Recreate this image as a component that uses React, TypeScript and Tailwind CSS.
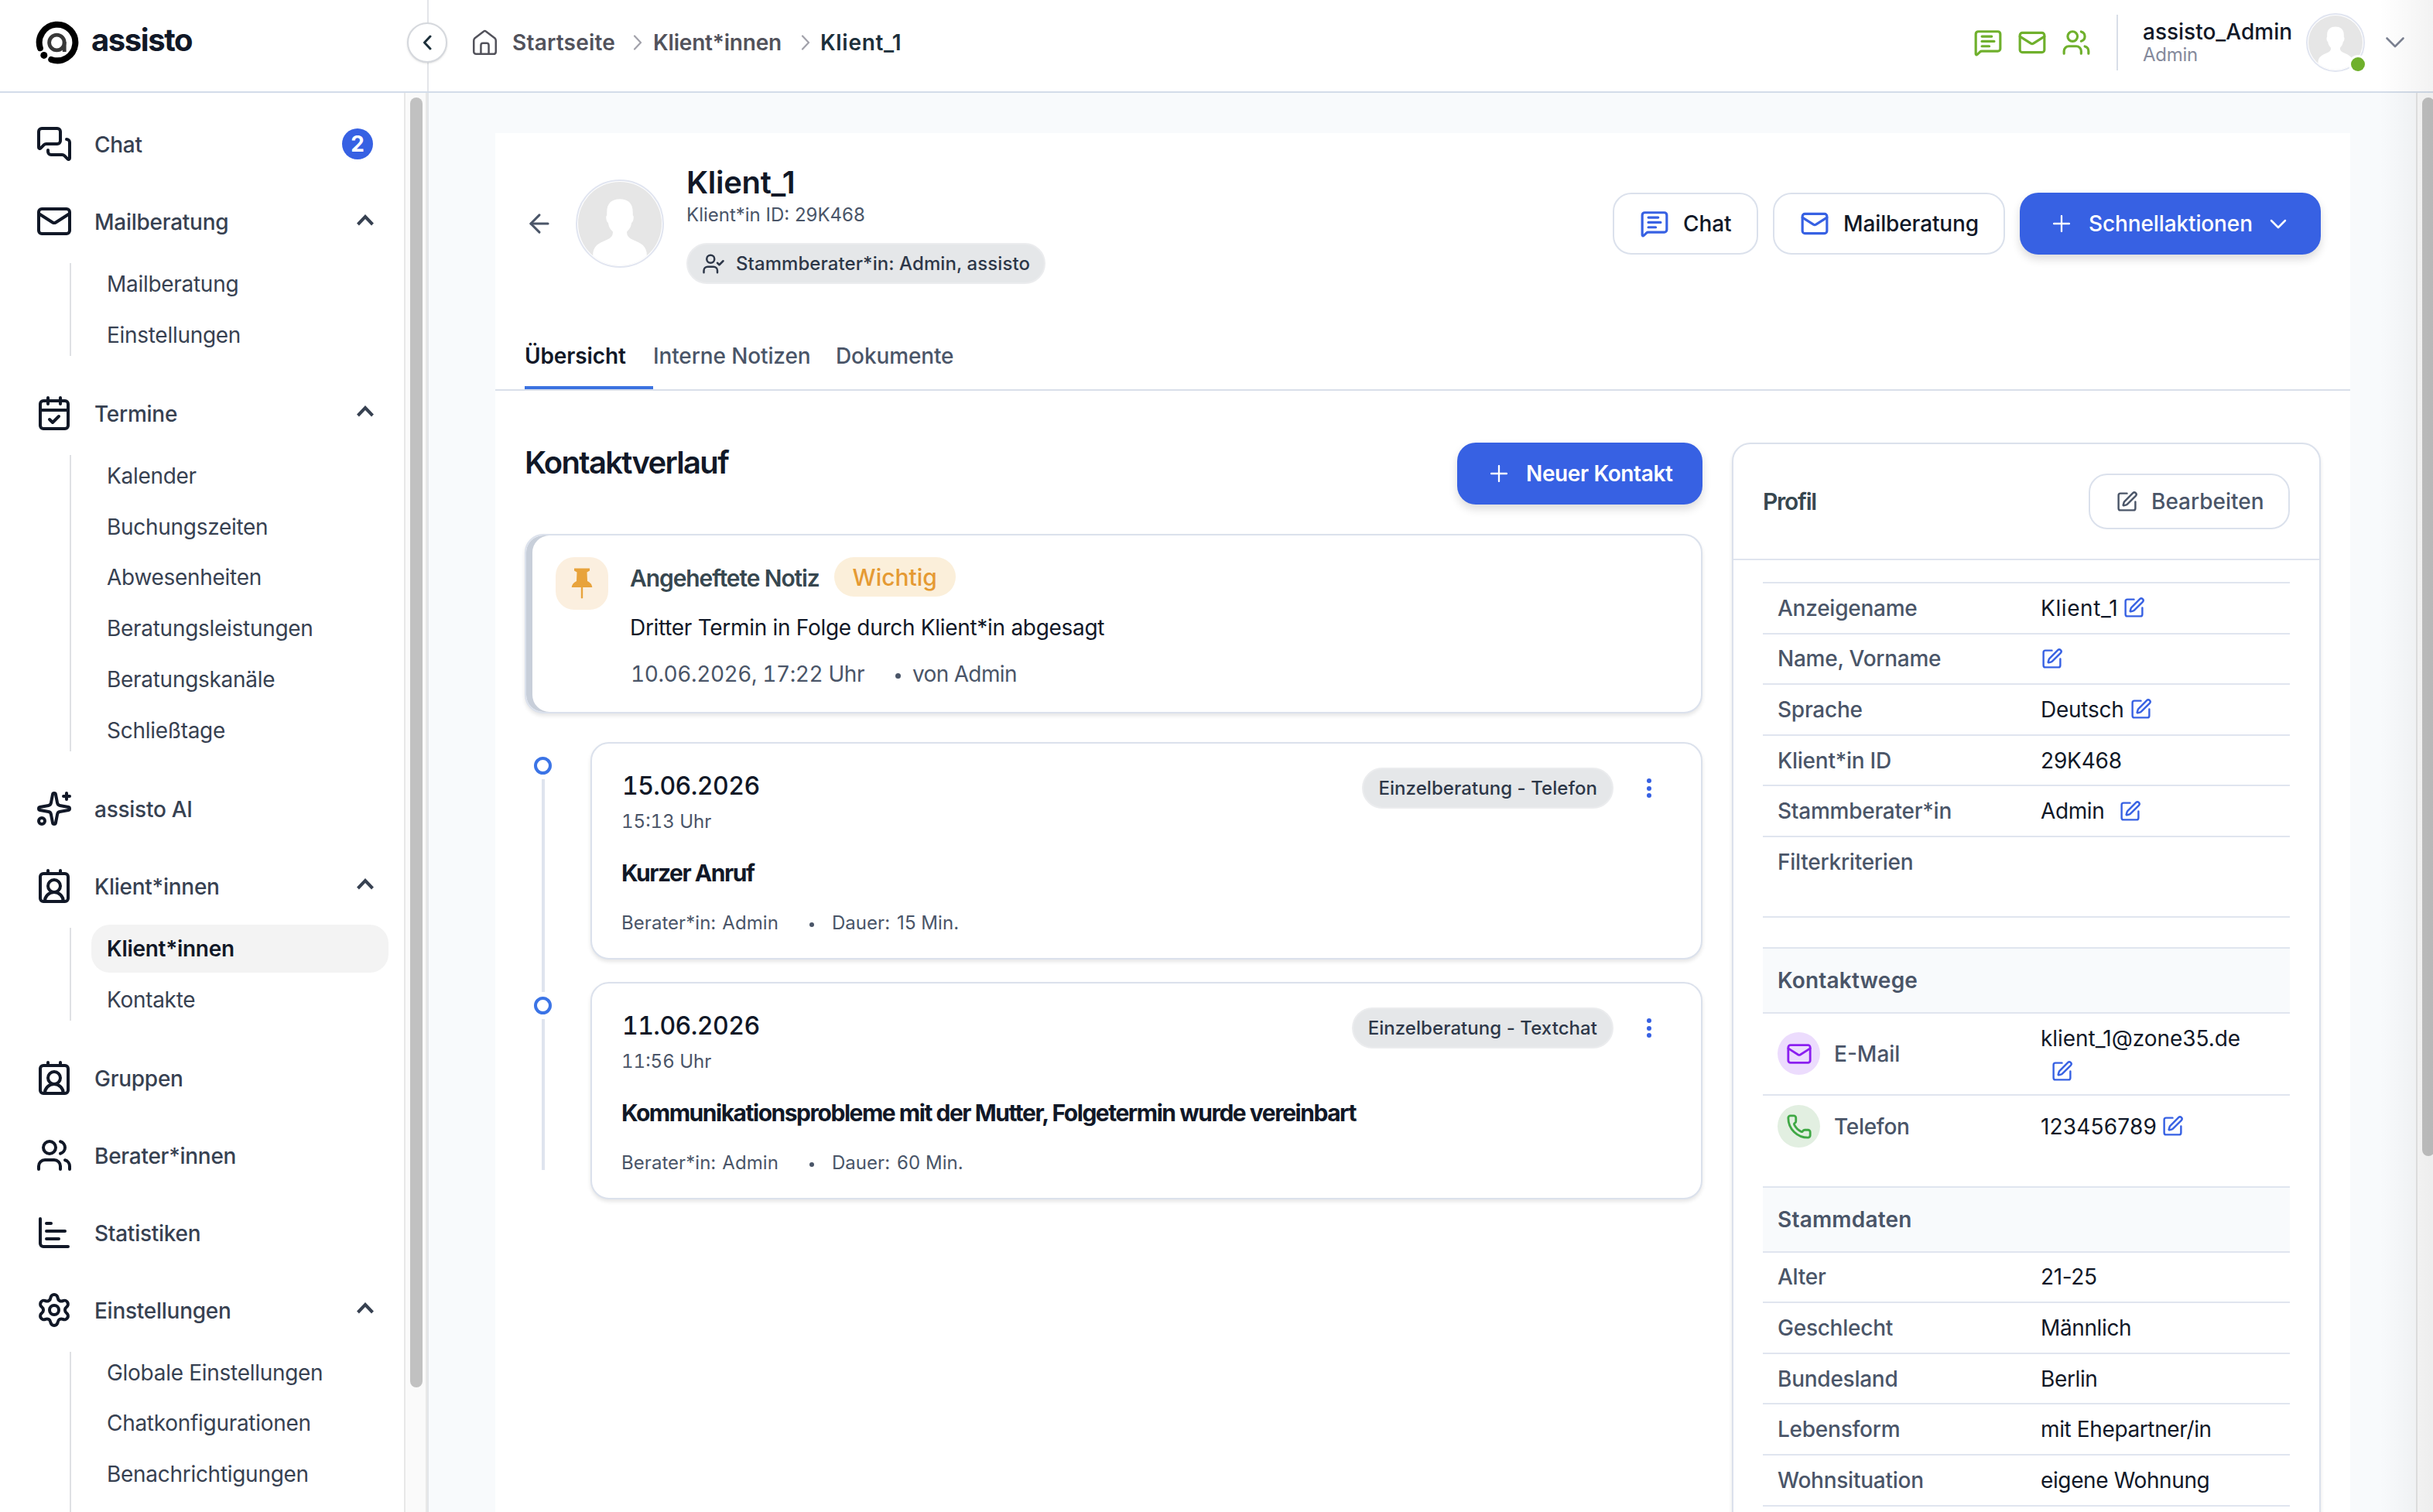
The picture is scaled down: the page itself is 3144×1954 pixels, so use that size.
import type { ReactNode } from 'react';
import {
  ArrowLeft,
  CalendarCheck,
  ChartBar,
  ContactRound,
  Mail,
  MessageSquareText,
  MessagesSquare,
  Phone,
  Settings,
  Sparkles,
  SquarePen,
  UserCheck,
  Users,
} from 'lucide-react';
import type { LucideIcon } from 'lucide-react';

type NavEntry = {
  label: string;
  icon: LucideIcon;
  badge?: number;
  active?: string;
  children?: string[];
};

const navEntries: NavEntry[] = [
  { label: 'Chat', icon: MessagesSquare, badge: 2 },
  { label: 'Mailberatung', icon: Mail, children: ['Mailberatung', 'Einstellungen'] },
  {
    label: 'Termine',
    icon: CalendarCheck,
    children: [
      'Kalender',
      'Buchungszeiten',
      'Abwesenheiten',
      'Beratungsleistungen',
      'Beratungskanäle',
      'Schließtage',
    ],
  },
  { label: 'assisto AI', icon: Sparkles },
  { label: 'Klient*innen', icon: ContactRound, active: 'Klient*innen', children: ['Klient*innen', 'Kontakte'] },
  { label: 'Gruppen', icon: ContactRound },
  { label: 'Berater*innen', icon: Users },
  { label: 'Statistiken', icon: ChartBar },
  {
    label: 'Einstellungen',
    icon: Settings,
    children: ['Globale Einstellungen', 'Chatkonfigurationen', 'Benachrichtigungen'],
  },
];

const contacts = [
  {
    date: '15.06.2026',
    time: '15:13 Uhr',
    title: 'Kurzer Anruf',
    type: 'Einzelberatung - Telefon',
    duration: '15 Min.',
  },
  {
    date: '11.06.2026',
    time: '11:56 Uhr',
    title: 'Kommunikationsprobleme mit der Mutter, Folgetermin wurde vereinbart',
    type: 'Einzelberatung - Textchat',
    duration: '60 Min.',
  },
];

const masterData = [
  { label: 'Alter', value: '21-25' },
  { label: 'Geschlecht', value: 'Männlich' },
  { label: 'Bundesland', value: 'Berlin' },
  { label: 'Lebensform', value: 'mit Ehepartner/in' },
  { label: 'Wohnsituation', value: 'eigene Wohnung' },
];

function Logo() {
  return (
    <svg width="60" height="60" viewBox="0 0 60 60" fill="none">
      <path d="M7.9 37.2A23.3 23.3 0 1 1 22.2 51.9" stroke="#000" strokeWidth="8" strokeLinecap="round" />
      <circle cx="12.8" cy="46.4" r="4.5" fill="#000" />
      <circle cx="29.4" cy="30" r="9.8" stroke="#383838" strokeWidth="4.8" />
      <path d="M39.2 29v13" stroke="#383838" strokeWidth="4.8" />
    </svg>
  );
}

function Avatar({ className }: { className: string }) {
  return (
    <div className={`${className} shrink-0 overflow-hidden rounded-full border-2 border-[#e1e5f0] bg-white p-px`}>
      <svg className="h-full w-full rounded-full" viewBox="0 0 100 100">
        <rect width="100" height="100" fill="#e6e6e6" />
        <path
          fill="#fff"
          d="M50 20.6C41 20.6 34.5 25 34.5 36V40C32.5 41 34 48 36 49C37 55 39 57 41.5 59.5C42 64 40 66 37 68C28 72.5 20 74 18 84L17 101H83L82 84C80 74 72 72.5 63 68C60 66 58 64 58.5 59.5C61 57 63 55 64 49C66 48 67.5 41 65.5 40V36C65.5 25 59 20.6 50 20.6Z"
        />
      </svg>
    </div>
  );
}

function ChevronUp() {
  return (
    <svg width="22" height="15" viewBox="0 0 22 15" fill="none">
      <path d="M1.5 13L11 3L20.5 13" stroke="#374151" strokeWidth="4" />
    </svg>
  );
}

function BreadcrumbChevron() {
  return (
    <svg width="12" height="20" viewBox="0 0 12 20" fill="none">
      <path d="M2 1.5L10 10L2 18.5" stroke="#a1a1aa" strokeWidth="2.2" strokeLinecap="round" strokeLinejoin="round" />
    </svg>
  );
}

function PlusSign() {
  return (
    <svg width="22" height="22" viewBox="0 0 22 22" fill="none">
      <path d="M11 1v20M1 11h20" stroke="#fff" strokeWidth="2.3" strokeLinecap="round" />
    </svg>
  );
}

function EditIcon() {
  return <SquarePen size={29} strokeWidth={2} className="shrink-0 text-[#3761e3]" />;
}

function Sidebar() {
  return (
    <aside className="flex w-[554px] shrink-0 overflow-hidden border-r-2 border-[#e3e5e9] bg-white">
      <nav className="w-[522px] pt-4">
        {navEntries.map((entry) => (
          <div key={entry.label}>
            <div className="flex h-[100px] items-center pr-[39px] pl-[46px]">
              <entry.icon size={48} strokeWidth={2} className="shrink-0 text-[#111827]" />
              <span className="mt-0.5 ml-[28px] text-[28px] font-medium tracking-[-0.26px] text-[#374151]">
                {entry.label}
              </span>
              {entry.badge && (
                <span className="mr-px ml-auto flex size-10 items-center justify-center rounded-full bg-[#3761e3] text-[28px] font-bold text-white">
                  {entry.badge}
                </span>
              )}
              {entry.children && (
                <span className="mb-1 ml-auto">
                  <ChevronUp />
                </span>
              )}
            </div>
            {entry.children && (
              <div className="flex pb-5 pl-[90px]">
                <div className="my-1 w-0.5 shrink-0 bg-[#dfe1e4]" />
                <div
                  className={`ml-[26px] flex w-[384px] flex-col gap-[3.8px] ${
                    entry.label === 'Einstellungen' ? 'min-h-[240px]' : ''
                  }`}
                >
                  {entry.children.map((child) => (
                    <div
                      key={child}
                      className={`flex h-[62px] items-center rounded-3xl pl-5 text-[28px] tracking-[-0.29px] ${
                        child === entry.active
                          ? 'bg-[#f3f3f3] font-semibold text-[#111827]'
                          : 'text-[#374151]'
                      }`}
                    >
                      {child}
                    </div>
                  ))}
                </div>
              </div>
            )}
          </div>
        ))}
      </nav>
      <div className="w-[30px] border-x-2 border-[#e8e8e8] bg-[#fafafa] pt-1.5 pl-1.5">
        <div className="h-[1667px] w-4 rounded-full bg-[#c1c1c1]" />
      </div>
    </aside>
  );
}

function TopBar() {
  return (
    <header className="relative flex h-[120px] shrink-0 border-b-2 border-[#d3dce9] bg-white">
      <div className="flex w-[554px] items-center border-r-2 border-[#e3e5e9] pb-2 pl-11">
        <Logo />
        <span className="-mt-[7px] ml-[14px] text-[40px] font-bold tracking-[-1.42px] text-[#111827]">assisto</span>
      </div>
      <button className="absolute top-[29px] left-[526px] flex size-[52px] items-center justify-center rounded-full border-2 border-[#d5d8dd] bg-white shadow-sm">
        <svg width="12" height="20" viewBox="0 0 12 20" fill="none">
          <path d="M10 2L2.5 10L10 18" stroke="#1c2f3a" strokeWidth="3" strokeLinecap="round" strokeLinejoin="round" />
        </svg>
      </button>

      <div className="flex flex-1 items-center pb-2 pl-[56px] text-[28px] text-[#52525b]">
        <svg width="33" height="34" viewBox="0 0 34 34" fill="none" stroke="#52525b" strokeWidth="2.6" strokeLinejoin="round">
          <path d="M2.3 14.5C2.3 13 2.8 12 3.8 11L15.3 2.2C16.4 1.3 17.6 1.3 18.7 2.2L30.2 11C31.2 12 31.7 13 31.7 14.5V29C31.7 31 30.5 32.3 28.5 32.3H5.5C3.5 32.3 2.3 31 2.3 29Z" />
          <path d="M11.8 32V20.5C11.8 18.8 12.8 17.8 14.5 17.8H19.5C21.2 17.8 22.2 18.8 22.2 20.5V32" />
        </svg>
        <span className="ml-[19px] font-semibold tracking-[0.2px]">Startseite</span>
        <span className="ml-[23px]">
          <BreadcrumbChevron />
        </span>
        <span className="ml-[14px] font-semibold tracking-[-0.2px]">Klient*innen</span>
        <span className="ml-[25px]">
          <BreadcrumbChevron />
        </span>
        <span className="ml-[13px] font-semibold tracking-[0.7px] text-[#1c2f3a]">Klient_1</span>
      </div>

      <div className="flex items-center pr-[36px] pb-2">
        <div className="flex gap-[19px] text-[#6fb02c]">
          <MessageSquareText size={38} strokeWidth={2} />
          <Mail size={38} strokeWidth={2} />
          <Users size={38} strokeWidth={2} />
        </div>
        <div className="ml-[33px] h-[72px] w-0.5 bg-[#d8dee8]" />
        <div className="ml-[32px] flex w-[211px] flex-col">
          <span className="text-[28px] leading-8 font-medium text-[#111827]">assisto_Admin</span>
          <span className="text-[24px] leading-7 tracking-[-0.3px] text-[#858a9c]">Admin</span>
        </div>
        <div className="relative">
          <Avatar className="size-[76px]" />
          <span className="absolute right-0 bottom-px size-[18px] rounded-full bg-[#6fb02c] ring-3 ring-white" />
        </div>
        <svg className="ml-[26px]" width="26" height="16" viewBox="0 0 26 16" fill="none">
          <path d="M2.5 2.5L13 13L23.5 2.5" stroke="#7c8292" strokeWidth="2.6" strokeLinecap="round" strokeLinejoin="round" />
        </svg>
      </div>
    </header>
  );
}

function ClientHeader() {
  return (
    <div className="border-b-2 border-[#d9dfea]">
      <div className="flex h-[234px] items-center px-[38px]">
        <ArrowLeft size={38} strokeWidth={1.9} className="text-[#4a5568]" />
        <Avatar className="ml-7 size-[114px]" />
        <div className="mt-[3px] ml-[29px] flex flex-col items-start">
          <h1 className="text-[40px] leading-[44px] font-semibold tracking-[-0.3px] text-[#111827]">Klient_1</h1>
          <p className="mt-0.5 text-[24px] leading-9 text-[#4a5568]">Klient*in ID: 29K468</p>
          <div className="mt-[18px] flex h-[53px] items-center rounded-full border-2 border-[#ebecee] bg-[#e5e7e9] pr-[18px] pl-[18px] text-[#2d3748]">
            <UserCheck size={30} strokeWidth={2} />
            <span className="ml-[14px] text-[24px] font-medium tracking-[0.08px]">Stammberater*in: Admin, assisto</span>
          </div>
        </div>

        <div className="ml-auto flex gap-[19px] text-[28px] font-medium tracking-[-0.12px] text-[#111827]">
          <button className="flex h-20 w-[188px] items-center rounded-3xl border-2 border-[#dbe1ec] pl-[33px]">
            <MessageSquareText size={38} strokeWidth={2} className="text-[#3761e3]" />
            <span className="ml-[18px]">Chat</span>
          </button>
          <button className="flex h-20 w-[300px] items-center rounded-3xl border-2 border-[#dbe1ec] pl-[33px]">
            <Mail size={38} strokeWidth={2} className="text-[#3761e3]" />
            <span className="ml-[18px]">Mailberatung</span>
          </button>
          <button className="flex h-20 w-[389px] items-center rounded-3xl bg-[#3761e3] pl-[43px] text-white shadow-[0_6px_12px_rgba(0,0,0,0.14)]">
            <PlusSign />
            <span className="ml-[24px]">Schnellaktionen</span>
            <svg className="ml-[22px]" width="22" height="13" viewBox="0 0 22 13" fill="none">
              <path d="M2 2L11 11L20 2" stroke="#fff" strokeWidth="2.5" strokeLinecap="round" strokeLinejoin="round" />
            </svg>
          </button>
        </div>
      </div>

      <div className="flex h-[97px] pl-[38px] text-[28px] tracking-[-0.12px]">
        <div className="flex w-[166px] items-center border-b-4 border-[#3b72e0] pt-[14px] font-semibold text-[#111827]">
          Übersicht
        </div>
        <div className="flex w-[236px] items-center border-b-4 border-transparent pt-[14px] font-medium text-[#4a5568]">
          Interne Notizen
        </div>
        <div className="flex items-center border-b-4 border-transparent pt-[14px] font-medium text-[#4a5568]">
          Dokumente
        </div>
      </div>
    </div>
  );
}

function PinnedNote() {
  return (
    <div className="mt-[38px] flex h-[232px] rounded-3xl border-2 border-[#dbe1ec] bg-white pt-7 pl-[38px] shadow-[inset_8px_0_0_#c8cfda,0_3px_5px_rgba(0,0,0,0.1)]">
      <div className="flex size-[68px] items-center justify-center rounded-3xl bg-[#fbefdf]">
        <svg className="-mt-px" width="28" height="40" viewBox="0 0 28 40" fill="#e8a33c">
          <path d="M4 0.5H24V3.5L20.5 5.5L21 17C24.5 18.5 27 21.5 27.3 25H0.7C1 21.5 3.5 18.5 7 17L7.5 5.5L4 3.5Z" />
          <path d="M12.8 25H15.2V38.5L14 39.8L12.8 38.5Z" />
        </svg>
      </div>
      <div className="ml-7">
        <div className="flex h-[51px] items-center">
          <h3 className="mt-1 text-[30px] font-semibold tracking-[-1.1px] text-[#37474f]">Angeheftete Notiz</h3>
          <span className="ml-[19px] flex h-[51px] w-[157px] items-center justify-center rounded-full bg-[#fbefda] pt-0.5 text-[30px] font-medium text-[#e59a33]">
            Wichtig
          </span>
        </div>
        <p className="mt-[20px] text-[28px] leading-10 tracking-[-0.3px] text-[#111827]">
          Dritter Termin in Folge durch Klient*in abgesagt
        </p>
        <p className="mt-5 flex items-center pl-px text-[28px] leading-10 text-[#4a5568] tabular-nums">
          <span className="w-[302px] tracking-[-0.42px] whitespace-nowrap">10.06.2026, 17:22 Uhr</span>
          <span className="mt-1 ml-[40px] size-[7px] rounded-full bg-[#4a5568]" />
          <span className="ml-[15px] tracking-[-0.6px]">von Admin</span>
        </p>
      </div>
    </div>
  );
}

function ContactTimeline() {
  return (
    <div className="mt-[37px]">
      {contacts.map((contact, index) => {
        const isLast = index === contacts.length - 1;
        return (
          <div key={contact.date} className="flex">
            <div className="flex w-[47px] shrink-0 flex-col items-center pt-[19px]">
              <div className="size-[23px] shrink-0 rounded-full border-[4.5px] border-[#3b74e6] bg-white" />
              <div className={`mt-1.5 w-1 flex-1 bg-[#dfe4ee] ${isLast ? 'mb-[38px]' : '-mb-[13px]'}`} />
            </div>
            <div className={`ml-[38px] flex-1 ${isLast ? '' : 'pb-[29px]'}`}>
              <div className="h-[281px] rounded-3xl border-2 border-[#dbe1ec] bg-white pt-[30px] pr-[64px] pl-[38px] shadow-[0_3px_5px_rgba(0,0,0,0.1)]">
                <div className="flex justify-between">
                  <div className="pt-[5px] tabular-nums">
                    <p className="pl-px text-[32px] leading-10 font-medium tracking-[-0.55px] text-[#111827]">
                      {contact.date}
                    </p>
                    <p className="mt-2.5 text-[24px] leading-8 text-[#4a5568]">{contact.time}</p>
                  </div>
                  <div className="flex h-[55px] items-center">
                    <span className="flex h-[53px] items-center rounded-full border-2 border-[#ebecee] bg-[#e5e7e9] pr-[19px] pl-[19px] text-[24px] font-medium tracking-[0.06px] text-[#2d3748]">
                      {contact.type}
                    </span>
                    <div className="ml-[43px] flex flex-col gap-[3.5px]">
                      <span className="size-[6px] rounded-full bg-[#3761e3]" />
                      <span className="size-[6px] rounded-full bg-[#3761e3]" />
                      <span className="size-[6px] rounded-full bg-[#3761e3]" />
                    </div>
                  </div>
                </div>
                <h3 className="mt-[30px] text-[30px] leading-10 font-bold tracking-[-1.48px] whitespace-nowrap text-[#111827]">
                  {contact.title}
                </h3>
                <div className="mt-[29px] flex items-center text-[24px] leading-8 tracking-[0.05px] text-[#4a5568]">
                  <span>Berater*in:</span>
                  <span className="ml-2">Admin</span>
                  <span className="mt-1 ml-[40px] size-1.5 rounded-full bg-[#4a5568]" />
                  <span className="ml-[23px]">Dauer:</span>
                  <span className="ml-[9px]">{contact.duration}</span>
                </div>
              </div>
            </div>
          </div>
        );
      })}
    </div>
  );
}

function ProfileRow({ label, children }: { label: string; children?: ReactNode }) {
  return (
    <div className="flex h-[65.6px] items-center border-t-2 border-[#e0e5ef] pl-[19px]">
      <span className="w-[340px] shrink-0 font-medium tracking-[-0.25px] text-[#4a5568]">{label}</span>
      <div className="flex items-center text-[#111827]">{children}</div>
    </div>
  );
}

function SectionTitle({ children }: { children: ReactNode }) {
  return (
    <div className="flex h-[84px] items-center border-t-2 border-[#e0e5ef] bg-[#f8fafc] pl-[19px] font-semibold tracking-[0.2px] text-[#4a5568]">
      {children}
    </div>
  );
}

function ProfileCard() {
  return (
    <div className="w-[761px] shrink-0 rounded-3xl border-2 border-[#dbe1ec] bg-white shadow-[0_3px_5px_rgba(0,0,0,0.1)]">
      <div className="flex h-[150px] items-center justify-between border-b-2 border-[#dfe4ef] px-[38px]">
        <h2 className="text-[30px] font-semibold tracking-[-1.25px] text-[#37474f]">Profil</h2>
        <button className="flex h-[72px] w-[260px] items-center rounded-3xl border-2 border-[#dbe1ec] pl-[33px] text-[28px] font-medium text-[#4a5568]">
          <SquarePen size={29} strokeWidth={2} />
          <span className="ml-[17px]">Bearbeiten</span>
        </button>
      </div>

      <div className="px-[38px] pt-7 text-[28px]">
        <ProfileRow label="Anzeigename">
          <span className="mr-[6px] tracking-[0.6px]">Klient_1</span>
          <EditIcon />
        </ProfileRow>
        <ProfileRow label="Name, Vorname">
          <EditIcon />
        </ProfileRow>
        <ProfileRow label="Sprache">
          <span className="mr-[7px] tracking-[-0.25px]">Deutsch</span>
          <EditIcon />
        </ProfileRow>
        <ProfileRow label="Klient*in ID">
          <span className="tracking-[-0.2px]">29K468</span>
        </ProfileRow>
        <ProfileRow label="Stammberater*in">
          <span className="mr-[19px] tracking-[-0.4px]">Admin</span>
          <EditIcon />
        </ProfileRow>
        <ProfileRow label="Filterkriterien" />
        <div className="mb-[38px] h-10 border-b-2 border-[#e0e5ef]" />

        <SectionTitle>Kontaktwege</SectionTitle>
        <div className="flex h-[106px] items-center border-t-2 border-[#e0e5ef] pl-[19px]">
          <div className="flex w-[340px] items-center font-medium text-[#4a5568]">
            <span className="flex size-[55px] items-center justify-center rounded-full bg-[#ecdcfd]">
              <Mail size={34} strokeWidth={2} className="text-[#8b1ff0]" />
            </span>
            <span className="ml-[18px]">E-Mail</span>
          </div>
          <div className="pt-[3px] text-[#111827]">
            <p className="leading-[42px] tracking-[-0.05px]">klient_1@zone35.de</p>
            <div className="flex h-[42px] items-center pl-[13px]">
              <EditIcon />
            </div>
          </div>
        </div>
        <div className="flex h-[119px] border-t-2 border-[#e0e5ef] pl-[19px]">
          <div className="flex h-[80px] w-[340px] items-center font-medium text-[#4a5568]">
            <span className="flex size-[55px] items-center justify-center rounded-full bg-[#e2efe1]">
              <Phone size={34} strokeWidth={2} className="text-[#3fa845]" />
            </span>
            <span className="ml-[18px] tracking-[-0.3px]">Telefon</span>
          </div>
          <div className="flex h-[80px] items-center text-[#111827]">
            <span className="mr-[6px] tracking-[0.19px]">123456789</span>
            <EditIcon />
          </div>
        </div>

        <SectionTitle>Stammdaten</SectionTitle>
        {masterData.map((row) => (
          <ProfileRow key={row.label} label={row.label}>
            <span className="tracking-[-0.38px]">{row.value}</span>
          </ProfileRow>
        ))}
        <div className="h-20 border-t-2 border-[#e0e5ef]" />
      </div>
    </div>
  );
}

export default function App() {
  return (
    <div className="relative flex h-[1954px] w-[3144px] flex-col overflow-hidden bg-white font-['Inter',sans-serif]">
      <TopBar />
      <div className="flex min-h-0 flex-1">
        <Sidebar />
        <main className="flex-1 overflow-hidden bg-[#f8fafc] pt-[52px] pl-[86px]">
          <div className="min-h-[2000px] w-[2397px] bg-white">
            <ClientHeader />
            <div className="flex items-start justify-between px-[38px] pt-[67px]">
              <section className="w-[1522px]">
                <div className="flex h-20 justify-between">
                  <h2 className="text-[40px] leading-[52px] font-semibold tracking-[-1.7px] text-[#111827]">
                    Kontaktverlauf
                  </h2>
                  <button className="flex h-20 w-[317px] items-center rounded-3xl bg-[#3761e3] pl-[43px] text-[28px] font-semibold tracking-[-0.37px] text-white shadow-[0_6px_12px_rgba(0,0,0,0.14)]">
                    <PlusSign />
                    <span className="ml-[24px]">Neuer Kontakt</span>
                  </button>
                </div>
                <PinnedNote />
                <ContactTimeline />
              </section>
              <ProfileCard />
            </div>
          </div>
        </main>
        <div className="w-[22px] border-l-2 border-[#e4e4e4] bg-[#fafafa] pt-1.5 pl-1.5">
          <div className="h-[1368px] w-4 rounded-full bg-[#c1c1c1]" />
        </div>
      </div>
      <div className="pointer-events-none absolute inset-y-0 right-0 w-[70px] bg-linear-to-r from-transparent to-black/5" />
    </div>
  );
}
